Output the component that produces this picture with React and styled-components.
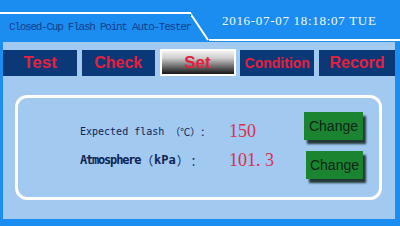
import React from "react";
import styled, { createGlobalStyle, css } from "styled-components";

const GlobalStyle = createGlobalStyle`
  body {
    margin: 0;
    background: #1c8df0;
  }
`;

const Screen = styled.div`
  width: 400px;
  height: 226px;
  background: #1c8df0;
  display: flex;
  flex-direction: column;
  overflow: hidden;
`;

const Header = styled.div`
  height: 42px;
  display: flex;
  flex-shrink: 0;
`;

const TitleBlock = styled.div`
  width: 191px;
  margin-top: 12px;
  height: 28px;
  border-top: 2px solid #ffffff;
  display: flex;
  align-items: center;
  padding-left: 9px;
  box-sizing: border-box;
  font-family: "Liberation Mono", monospace;
  font-size: 11px;
  letter-spacing: -1.25px;
  color: #13408f;
  white-space: nowrap;
`;

const Slant = styled.svg`
  width: 18px;
  height: 42px;
  flex-shrink: 0;
`;

const DateBlock = styled.div`
  flex: 1;
  height: 41px;
  border-bottom: 2px solid #ffffff;
  box-sizing: border-box;
  display: flex;
  align-items: center;
  padding-left: 13px;
  padding-top: 2px;
  font-family: "Liberation Serif", serif;
  font-size: 13px;
  letter-spacing: 0.7px;
  color: #f4f8ff;
  white-space: nowrap;
`;

const Panel = styled.div`
  flex: 1;
  margin: 0 5px 7px 3px;
  background: #a2c9f0;
  padding-top: 8px;
  display: flex;
  flex-direction: column;
`;

const Tabs = styled.div`
  display: grid;
  grid-template-columns: 74px 73px 76px 74px 76px;
  justify-content: space-between;
  height: 25px;
`;

const Tab = styled.div`
  background: #0b3877;
  color: #e4203e;
  font-family: "Liberation Sans", Arial, sans-serif;
  font-weight: bold;
  font-size: ${(p) => p.size}px;
  display: flex;
  align-items: center;
  justify-content: center;
  box-sizing: border-box;
  ${(p) =>
    p.active &&
    css`
      border: 2px solid #ffffff;
      margin-top: -1px;
      height: 27px;
      background: linear-gradient(
        to bottom,
        #f2f2f2 0%,
        #cfcfcf 30%,
        #7a7a7a 62%,
        #141414 100%
      );
    `}
`;

const Box = styled.div`
  margin: 20px 13px 19px 12px;
  flex: 1;
  border: 3px solid #ffffff;
  border-radius: 12px;
  display: flex;
  align-items: flex-start;
  padding: 14px 0 0 62px;
`;

const Fields = styled.div`
  display: grid;
  grid-template-columns: 149px 75px;
  grid-auto-rows: 24px;
  row-gap: 5px;
  margin-top: 7px;
  align-items: center;
`;

const Label = styled.div`
  display: flex;
  align-items: center;
  font-family: "DejaVu Sans Mono", monospace;
  color: #0d2454;
  white-space: nowrap;
  font-size: ${(p) => (p.big ? 12 : 10)}px;
  letter-spacing: ${(p) => (p.big ? "-1.2px" : "0")};
  font-weight: ${(p) => (p.big ? "bold" : "normal")};
`;

const Unit = styled.span`
  letter-spacing: 0;
`;

/* full-width punctuation, one box per glyph */
const Wide = styled.span`
  display: inline-block;
  width: ${(p) => p.w || 1}em;
  text-align: center;
  font-family: "Noto Sans CJK SC", sans-serif;
  letter-spacing: 0;
  font-weight: normal;
`;

const Value = styled.div`
  font-family: "Liberation Serif", serif;
  font-size: 18px;
  color: #d8304c;
  white-space: nowrap;
`;

const Dot = styled.span`
  display: inline-block;
  width: 9px;
`;

const Buttons = styled.div`
  display: flex;
  flex-direction: column;
  gap: 11px;
`;

const ChangeButton = styled.div`
  height: 28px;
  margin-left: ${(p) => p.shift || 0}px;
  width: ${(p) => 59 - (p.shift || 0)}px;
  background: #1a8430;
  box-shadow: 3px 4px 2px rgba(10, 30, 20, 0.85);
  display: flex;
  align-items: center;
  justify-content: center;
  font-family: "Liberation Sans", Arial, sans-serif;
  font-size: 14px;
  color: #0c2418;
`;

export default function App() {
  return (
    <>
      <GlobalStyle />
      <Screen>
        <Header>
          <TitleBlock>Closed-Cup Flash Point Auto-Tester</TitleBlock>
          <Slant viewBox="0 0 18 42">
            <line x1="-1" y1="13" x2="17" y2="40" stroke="#ffffff" strokeWidth="2" />
          </Slant>
          <DateBlock>2016-07-07 18:18:07 TUE</DateBlock>
        </Header>
        <Panel>
          <Tabs>
            <Tab size={17}>Test</Tab>
            <Tab size={16}>Check</Tab>
            <Tab size={17} active>
              Set
            </Tab>
            <Tab size={14}>Condition</Tab>
            <Tab size={16}>Record</Tab>
          </Tabs>
          <Box>
            <Fields>
              <Label>
                Expected flash&nbsp;<Wide>（</Wide>
                <Wide>℃</Wide>
                <Wide>）</Wide>
                <Wide>：</Wide>
              </Label>
              <Value>150</Value>
              <Label big>
                Atmosphere<Wide w={1.15}>（</Wide>
                <Unit>kPa</Unit>
                <Wide w={1.15}>）</Wide>
                <Wide w={1.15}>：</Wide>
              </Label>
              <Value>
                101<Dot>.</Dot>3
              </Value>
            </Fields>
            <Buttons>
              <ChangeButton>Change</ChangeButton>
              <ChangeButton shift={2}>Change</ChangeButton>
            </Buttons>
          </Box>
        </Panel>
      </Screen>
    </>
  );
}
